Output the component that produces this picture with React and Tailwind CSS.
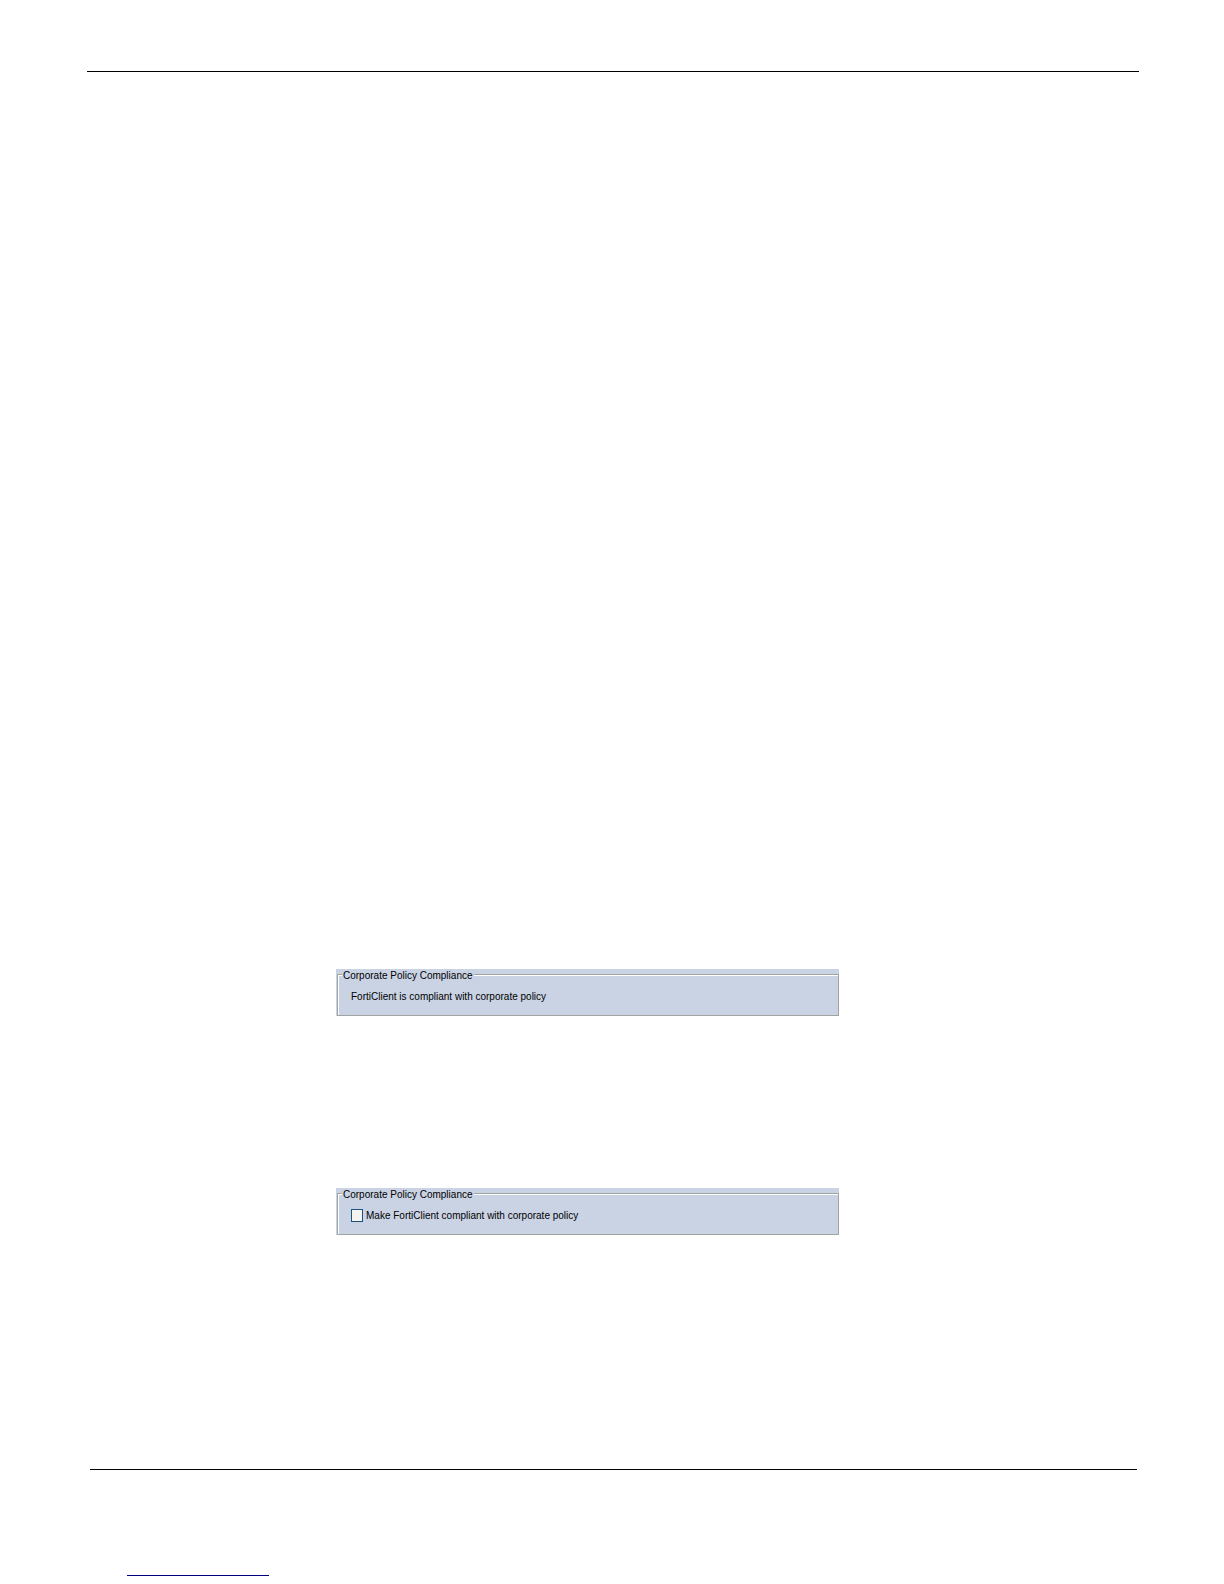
const PolicyGroup = ({ children }) => {
  return (
    <div className="w-full max-w-[503px] bg-[#cad3e4] pl-px">
      <fieldset className="h-[47px] border border-[#a0a3a0] pl-[13px] shadow-[inset_1px_1px_0_#ffffff]">
        <legend className="-ml-[9px] bg-[#cad3e4] px-px pt-0.5 text-[10px] leading-[9px]">
          Corporate Policy Compliance
        </legend>
        {children}
      </fieldset>
    </div>
  );
};

const App = () => {
  return (
    <div className="bg-white pt-[71px] font-['Liberation_Sans',Arial,sans-serif] text-black">
      <header className="mr-[85px] ml-[87px] border-t border-black" />

      <main className="flex flex-col gap-[172px] pt-[897px] pr-6 pb-[234px] pl-[336px]">
        <PolicyGroup>
          <p className="pt-2 text-[10px] leading-[18px]">FortiClient is compliant with corporate policy</p>
        </PolicyGroup>

        <PolicyGroup>
          <label className="flex items-start gap-[3px] pt-2 text-[10px] leading-[18px]">
            <input
              type="checkbox"
              className="mt-0.5 h-[13px] w-3 appearance-none border border-[#1c5180] bg-[#f3f3ef] checked:bg-[#21a121]"
            />
            Make FortiClient compliant with corporate policy
          </label>
        </PolicyGroup>
      </main>

      <footer className="mr-[87px] ml-[90px] border-t border-black pt-[105px] pb-2">
        <a
          href="#"
          aria-label="Document link"
          className="ml-[37px] block w-[142px] border-t border-[#000080]"
        />
      </footer>
    </div>
  );
};

export default App;
